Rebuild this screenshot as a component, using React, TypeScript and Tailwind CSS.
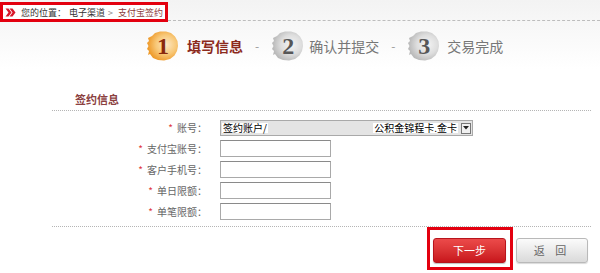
import React from 'react';

const cjk = { fontFamily: '"Noto Sans CJK SC", "Liberation Sans", sans-serif' };

function Blob({ n, active }: { n: string; active?: boolean }) {
  const id = active ? 'blobA' : 'blobB';
  return (
    <div className="relative w-[34px] h-[32px] shrink-0">
      <svg width="34" height="32" viewBox="0 0 34 32" className="absolute inset-0">
        <defs>
          <radialGradient id={id} cx="62%" cy="45%" r="60%">
            <stop offset="0%" stopColor={active ? '#fde8c4' : '#f4f4f4'} />
            <stop offset="55%" stopColor={active ? '#f8c878' : '#dedede'} />
            <stop offset="100%" stopColor={active ? '#ee9a2a' : '#b9b9b9'} />
          </radialGradient>
        </defs>
        <path
          d="M6 6 L9 3 L14 1.5 L20 1.5 L25 3 L29 6.5 L31.5 11 L32 16 L31 21 L28.5 25.5 L24 29 L18 30.5 L12 30 L7 28 L4 24 L2 25 L3 21 L1 19 L2.5 16 L1 13 L3 11 L2 8 Z"
          fill={`url(#${id})`}
        />
      </svg>
      <span
        className={`absolute inset-0 flex items-center justify-center font-bold text-[24px] leading-none ${active ? 'text-[#8a2a0c]' : 'text-[#575757]'}`}
        style={{ fontFamily: '"Liberation Serif", "DejaVu Serif", serif' }}
      >
        {n}
      </span>
    </div>
  );
}

function Row({ label, children }: { label: string; children: React.ReactNode }) {
  return (
    <div className="flex items-center">
      <div className="w-[207px] text-right text-[10px] text-[#666] leading-none">
        <span className="text-[#e0383e] mr-[4px]">*</span>
        {label}：
      </div>
      <div className="ml-[13px]">{children}</div>
    </div>
  );
}

function Input() {
  return (
    <div className="w-[111px] h-[17px] bg-white border border-[#a9a9a9] border-t-[#8a8a8a]" />
  );
}

export default function App() {
  return (
    <div className="w-[600px] h-[273px] bg-white overflow-hidden text-[#333]" style={cjk}>
      <div className="bg-gradient-to-b from-[#f3f3f3] to-white">
        <div className="flex items-end h-[22px]">
          <div className="w-[168px] h-[20px] border-[3px] border-[#e3000f] flex items-center pl-[2px] shrink-0 bg-white whitespace-nowrap overflow-hidden">
            <svg width="11" height="9" viewBox="0 0 11 9" className="shrink-0">
              <path d="M0.5 0.5 L3.5 0.5 L6.5 4.5 L3.5 8.5 L0.5 8.5 L3.5 4.5 Z" fill="#d8182a" />
              <path d="M4.5 0.5 L7.5 0.5 L10.5 4.5 L7.5 8.5 L4.5 8.5 L7.5 4.5 Z" fill="#d8182a" />
            </svg>
            <span className="ml-[5px] text-[9px] leading-none text-[#333]">您的位置：</span>
            <span className="ml-[3px] text-[9px] leading-none text-[#333]">电子渠道</span>
            <span className="ml-[3px] text-[9px] leading-none text-[#888]">&gt;</span>
            <span className="ml-[5px] text-[9px] leading-none text-[#8b3a3a]">支付宝签约</span>
          </div>
          <div className="flex-1 border-b border-dashed border-[#bdbdbd] mb-[1px]" />
        </div>
        <div className="flex items-center h-[47px] pl-[146px]">
          <Blob n="1" active />
          <span className="ml-[7px] text-[14px] font-bold text-[#8c2a1c] leading-none">填写信息</span>
          <span className="ml-[12px] mr-[12px] text-[12px] text-[#999]">-</span>
          <Blob n="2" />
          <span className="ml-[4px] text-[14px] text-[#777] leading-none">确认并提交</span>
          <span className="ml-[12px] mr-[12px] text-[12px] text-[#999]">-</span>
          <Blob n="3" />
          <span className="ml-[6px] text-[14px] text-[#777] leading-none">交易完成</span>
        </div>
      </div>

      <div className="mt-[25px] pl-[75px] text-[11px] font-bold text-[#8b4040] leading-none">签约信息</div>
      <div className="mt-[5px] ml-[52px] mr-[9px] border-b border-dotted border-[#b5b5b5]" />

      <div className="mt-[9px] flex flex-col gap-[4px]">
        <Row label="账号">
          <div className="flex items-center w-[253px] h-[16px] bg-[#e4e4e4] border border-[#a9a9a9] text-[10px] text-black leading-none">
            <span className="bg-white ml-[1px] px-[1px]">签约账户/</span>
            <span className="ml-auto bg-white px-[1px]">公积金锦程卡.金卡</span>
            <div className="ml-[3px] mr-[1px] w-[10px] h-[11px] bg-[#f0f0f0] border border-[#777] flex items-center justify-center">
              <svg width="6" height="4" viewBox="0 0 6 4">
                <path d="M0 0 L6 0 L3 3.5 Z" fill="#222" />
              </svg>
            </div>
          </div>
        </Row>
        <Row label="支付宝账号"><Input /></Row>
        <Row label="客户手机号"><Input /></Row>
        <Row label="单日限额"><Input /></Row>
        <Row label="单笔限额"><Input /></Row>
      </div>

      <div className="mt-[6px] ml-[52px] mr-[9px] border-b border-dotted border-[#b5b5b5]" />

      <div className="flex justify-end pr-[12px]">
        <div className="w-[86px] h-[43px] border-[3px] border-[#e3000f] pt-[6px] pl-[3px]">
          <button className="w-[73px] h-[25px] rounded-[3px] border border-[#b8141c] bg-gradient-to-b from-[#ec4a4a] to-[#c8131b] text-white text-[11px] leading-none shadow-[0_1px_1px_rgba(0,0,0,0.25)]">
            下一步
          </button>
        </div>
        <div className="ml-[3px] pt-[9px]">
          <button className="w-[72px] h-[25px] rounded-[3px] border border-[#b9b9b9] bg-gradient-to-b from-[#fbfbfb] to-[#dadada] text-[#666] text-[11px] leading-none tracking-[4px] shadow-[0_1px_1px_rgba(0,0,0,0.15)]">
            返 回
          </button>
        </div>
      </div>
    </div>
  );
}
